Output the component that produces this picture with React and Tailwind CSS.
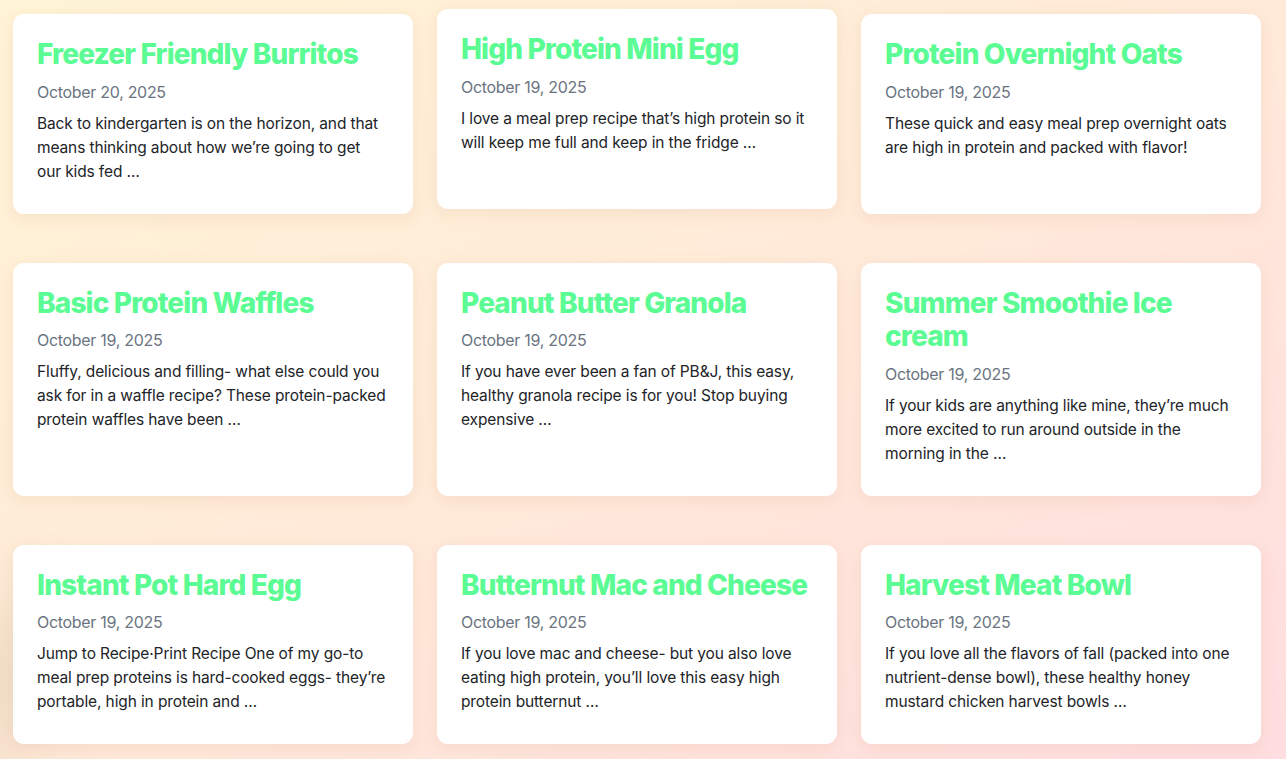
import React from "react";

const posts = [
  { title: "Freezer Friendly Burritos", date: "October 20, 2025", text: "Back to kindergarten is on the horizon, and that means thinking about how we’re going to get our kids fed …" },
  { title: "High Protein Mini Egg", date: "October 19, 2025", text: "I love a meal prep recipe that’s high protein so it will keep me full and keep in the fridge …", hover: true },
  { title: "Protein Overnight Oats", date: "October 19, 2025", text: "These quick and easy meal prep overnight oats are high in protein and packed with flavor!" },
  { title: "Basic Protein Waffles", date: "October 19, 2025", text: "Fluffy, delicious and filling- what else could you ask for in a waffle recipe? These protein-packed protein waffles have been …" },
  { title: "Peanut Butter Granola", date: "October 19, 2025", text: "If you have ever been a fan of PB&J, this easy, healthy granola recipe is for you! Stop buying expensive …" },
  { title: "Summer Smoothie Ice cream", date: "October 19, 2025", text: "If your kids are anything like mine, they’re much more excited to run around outside in the morning in the …" },
  { title: "Instant Pot Hard Egg", date: "October 19, 2025", text: "Jump to Recipe·Print Recipe One of my go-to meal prep proteins is hard-cooked eggs- they’re portable, high in protein and …" },
  { title: "Butternut Mac and Cheese", date: "October 19, 2025", text: "If you love mac and cheese- but you also love eating high protein, you’ll love this easy high protein butternut …" },
  { title: "Harvest Meat Bowl", date: "October 19, 2025", text: "If you love all the flavors of fall (packed into one nutrient-dense bowl), these healthy honey mustard chicken harvest bowls …" },
];

export default function App() {
  return (
    <div
      className="relative min-h-[759px] w-full overflow-hidden bg-gradient-to-br from-[#fff4d6] via-[#ffead9] to-[#ffdde0]"
      style={{ fontFamily: "Inter, 'Noto Sans', sans-serif" }}
    >
      <div className="pointer-events-none absolute left-[-60px] top-[600px] h-[160px] w-[90px] rounded-full bg-[#d9c4a6] opacity-50 blur-2xl" />
      <div className="relative grid grid-cols-[400px_400px_400px] gap-x-6 gap-y-[49px] pl-[13px] pt-[14px] pb-4">
        {posts.map((p) => (
          <div
            key={p.title}
            className={`rounded-[11px] bg-white px-6 pt-6 pb-[30px] shadow-[0_4px_16px_rgba(200,150,110,0.16)] ${p.hover ? "-translate-y-[5px]" : ""}`}
          >
            <h2 className="mb-2 text-[28px] font-extrabold leading-[1.2] tracking-[-0.85px] text-[#5cfc94]">{p.title}</h2>
            <div className="mb-2 text-[16px] leading-6 tracking-[-0.3px] text-[#6b7480]">{p.date}</div>
            <p className="max-w-[349.5px] text-[15.5px] leading-6 tracking-[-0.12px] text-[#222428]">{p.text}</p>
          </div>
        ))}
      </div>
    </div>
  );
}
